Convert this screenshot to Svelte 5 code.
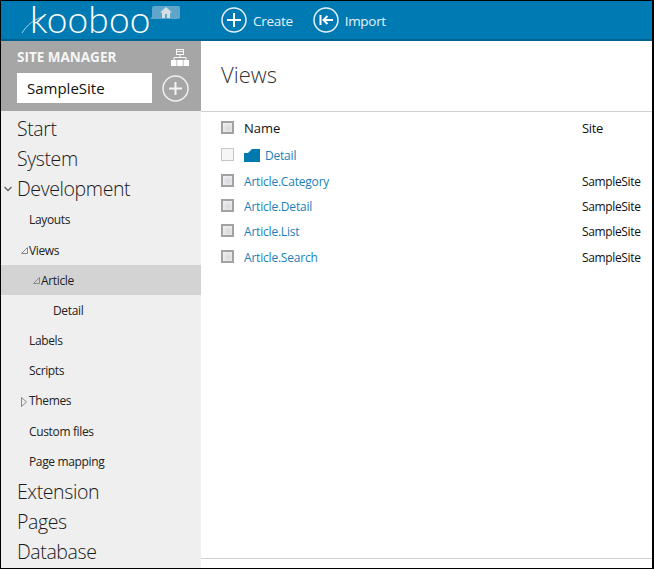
<script>
	const navItems = [
		{ label: 'Start', level: 0 },
		{ label: 'System', level: 0 },
		{ label: 'Development', level: 0, arrow: 'chevron' },
		{ label: 'Layouts', level: 1 },
		{ label: 'Views', level: 1, arrow: 'open' },
		{ label: 'Article', level: 2, arrow: 'open', active: true },
		{ label: 'Detail', level: 3 },
		{ label: 'Labels', level: 1 },
		{ label: 'Scripts', level: 1 },
		{ label: 'Themes', level: 1, arrow: 'closed' },
		{ label: 'Custom files', level: 1 },
		{ label: 'Page mapping', level: 1 },
		{ label: 'Extension', level: 0 },
		{ label: 'Pages', level: 0 },
		{ label: 'Database', level: 0 }
	];

	const views = ['Article.Category', 'Article.Detail', 'Article.List', 'Article.Search'];
</script>

<div class="window">
	<header class="topbar">
		<div class="logo">
			<svg class="swoosh" width="30" height="30" viewBox="0 0 30 30">
				<path d="M1 26 C6 18 13 12 24 9" fill="none" stroke="#a9d5e9" stroke-width="1" />
			</svg>
			<span class="logo-text">kooboo</span>
			<span class="home">
				<svg width="12" height="11" viewBox="0 0 12 11">
					<path d="M6 0 L12 5.5 L10 5.5 L10 11 L7 11 L7 7 L5 7 L5 11 L2 11 L2 5.5 L0 5.5 Z" fill="#d3dfe5" />
				</svg>
			</span>
		</div>
		<nav class="actions">
			<button class="action">
				<svg width="26" height="26" viewBox="0 0 26 26">
					<circle cx="13" cy="13" r="12" fill="none" stroke="#e8f2f7" stroke-width="1.5" />
					<path d="M13 6 V20 M6 13 H20" stroke="#fff" stroke-width="2" />
				</svg>
				<span>Create</span>
			</button>
			<button class="action">
				<svg width="26" height="26" viewBox="0 0 26 26">
					<circle cx="13" cy="13" r="12" fill="none" stroke="#e8f2f7" stroke-width="1.5" />
					<path d="M7.5 8 V18 M20 13 H11 M14.5 9 L10.5 13 L14.5 17" fill="none" stroke="#fff" stroke-width="2" />
				</svg>
				<span>Import</span>
			</button>
		</nav>
	</header>

	<div class="body">
		<aside class="sidebar">
			<div class="site-manager">
				<div class="sm-title">
					<span>SITE MANAGER</span>
					<svg width="18" height="17" viewBox="0 0 18 17">
						<rect x="5.5" y="0.5" width="7" height="5" fill="#a6a6a6" stroke="#f6f6f6" />
						<rect x="6" y="2" width="6" height="1" fill="#f6f6f6" />
						<path d="M9 6 V8.5 M3 11 V8.5 H15 V11" fill="none" stroke="#f6f6f6" />
						<rect x="0" y="11" width="5.5" height="6" fill="#fff" />
						<rect x="6.2" y="11" width="5.6" height="6" fill="#fff" />
						<rect x="12.5" y="11" width="5.5" height="6" fill="#fff" />
					</svg>
				</div>
				<div class="sm-row">
					<div class="site-input">SampleSite</div>
					<svg width="27" height="27" viewBox="0 0 27 27">
						<circle cx="13.5" cy="13.5" r="12.5" fill="none" stroke="#f0f0f0" stroke-width="1.5" />
						<path d="M13.5 7 V20 M7 13.5 H20" stroke="#f4f4f4" stroke-width="2" />
					</svg>
				</div>
			</div>
			<ul class="nav">
				{#each navItems as item}
					<li class="item level-{item.level}" class:active={item.active}>
						{#if item.arrow === 'chevron'}
							<svg class="arrow" width="8" height="6" viewBox="0 0 8 6">
								<path d="M0.5 1 L4 4.5 L7.5 1" fill="none" stroke="#666" stroke-width="1.4" />
							</svg>
						{:else if item.arrow === 'open'}
							<svg class="arrow" width="7" height="7" viewBox="0 0 7 7">
								<path d="M6.5 0.5 V6.5 H0.5 Z" fill="none" stroke="#888" />
							</svg>
						{:else if item.arrow === 'closed'}
							<svg class="arrow" width="6" height="10" viewBox="0 0 6 10">
								<path d="M0.5 0.5 L5.5 5 L0.5 9.5 Z" fill="none" stroke="#888" />
							</svg>
						{/if}
						{item.label}
					</li>
				{/each}
			</ul>
		</aside>

		<main class="content">
			<h1>Views</h1>
			<div class="table">
				<div class="row head">
					<span class="check"></span>
					<span class="name">Name</span>
					<span class="site">Site</span>
				</div>
				<div class="row folder">
					<span class="check light"></span>
					<span class="name">
						<svg width="16" height="13" viewBox="0 0 16 13">
							<path d="M0 4 H4 L8 0 H16 V13 H0 Z" fill="#0078b0" />
						</svg>
						<a href="#detail">Detail</a>
					</span>
				</div>
				{#each views as view}
					<div class="row">
						<span class="check"></span>
						<span class="name"><a href="#view">{view}</a></span>
						<span class="site">SampleSite</span>
					</div>
				{/each}
			</div>
			<div class="footer"></div>
		</main>
	</div>
</div>

<style>
	:global(body) {
		margin: 0;
		background: #000;
	}

	.window {
		width: 651px;
		height: 567px;
		margin: 1px 0 0 1px;
		background: #fff;
		display: flex;
		flex-direction: column;
		font-family: "Open Sans", "Noto Sans", sans-serif;
	}

	.topbar {
		height: 40px;
		flex: none;
		box-sizing: border-box;
		background: #007ab2;
		border-bottom: 2px solid #00628f;
		display: flex;
		align-items: center;
	}

	.logo {
		width: 200px;
		height: 38px;
		flex: none;
		position: relative;
	}

	.logo-text {
		position: absolute;
		left: 29px;
		top: 0;
		color: #fff;
		font-family: Lato, sans-serif;
		font-weight: 300;
		font-size: 37px;
		line-height: 36px;
		letter-spacing: 0.2px;
	}

	.swoosh {
		position: absolute;
		left: 20px;
		top: 6px;
	}

	.home {
		position: absolute;
		left: 151px;
		top: 5px;
		width: 28px;
		height: 13px;
		background: #5fa6ca;
		border-radius: 2px;
		display: flex;
		align-items: center;
		justify-content: center;
	}

	.home::after {
		content: '';
		position: absolute;
		left: -2px;
		bottom: 0;
		border-bottom: 3px solid #5fa6ca;
		border-left: 3px solid transparent;
	}

	.actions {
		display: flex;
		gap: 20px;
		padding-left: 20px;
	}

	.action {
		display: flex;
		align-items: center;
		gap: 6px;
		padding: 0;
		border: 0;
		background: none;
		color: #e8f2f7;
		font: inherit;
		font-size: 13.5px;
		letter-spacing: -0.3px;
	}

	.action span {
		padding-top: 2px;
	}

	.body {
		flex: 1;
		display: flex;
		min-height: 0;
	}

	.sidebar {
		width: 200px;
		flex: none;
		background: #efefef;
		display: flex;
		flex-direction: column;
	}

	.site-manager {
		height: 70px;
		flex: none;
		box-sizing: border-box;
		background: #a6a6a6;
		padding: 4px 12px 0 16px;
	}

	.sm-title {
		display: flex;
		justify-content: space-between;
		align-items: center;
		height: 24px;
		color: #f6f6f6;
		font-size: 13.5px;
		font-weight: 700;
	}

	.sm-row {
		display: flex;
		justify-content: space-between;
		align-items: center;
		margin-top: 4px;
	}

	.site-input {
		width: 135px;
		height: 30px;
		box-sizing: border-box;
		padding-left: 10px;
		background: #fff;
		color: #111;
		font-size: 15px;
		line-height: 30px;
	}

	.nav {
		list-style: none;
		margin: 3px 0 0;
		padding: 0;
	}

	.item {
		position: relative;
		height: 30.17px;
		line-height: 32px;
		color: #222;
		font-size: 12px;
		letter-spacing: -0.35px;
	}

	.level-0 {
		padding-left: 16px;
		font-size: 19.5px;
		font-weight: 300;
		letter-spacing: -0.4px;
		line-height: 30px;
		color: #1a1a1a;
	}

	.level-1 + .level-0 {
		margin-top: 0.7px;
	}

	.level-1 {
		padding-left: 28px;
	}

	.level-2 {
		padding-left: 40px;
	}

	.level-3 {
		padding-left: 52px;
	}

	.active {
		background: #d3d3d3;
	}

	.arrow {
		position: absolute;
		top: 12px;
		left: 20px;
	}

	.level-0 .arrow {
		left: 3px;
	}

	.level-2 .arrow {
		left: 32px;
	}

	.content {
		flex: 1;
		display: flex;
		flex-direction: column;
		min-width: 0;
	}

	h1 {
		height: 71px;
		flex: none;
		box-sizing: border-box;
		margin: 0;
		padding: 16px 0 0 20px;
		border-bottom: 1px solid #d0d0d0;
		color: #333;
		font-size: 22px;
		font-weight: 300;
		line-height: 34px;
	}

	.table {
		flex: 1;
		padding: 0 12px 0 20px;
	}

	.row {
		display: flex;
		align-items: center;
		height: 25.4px;
		font-size: 12px;
		color: #111;
		letter-spacing: -0.2px;
	}

	.head {
		height: 31px;
		font-size: 13px;
		letter-spacing: 0;
	}

	.check {
		width: 13px;
		height: 13px;
		box-sizing: border-box;
		flex: none;
		margin: -2px 10px 0 0;
		border: 2px solid #a2a2a2;
		background: radial-gradient(circle at 60% 60%, #d6d8dc, #f4f4f4);
	}

	.check.light {
		border: 1px solid #c6c6c6;
		background: #f6f6f6;
	}

	.head .check {
		margin-top: 0;
	}

	.name {
		flex: 1;
		display: flex;
		align-items: center;
		gap: 5px;
	}

	.name a {
		color: #1a7fb8;
		text-decoration: none;
	}

	.site {
		width: 58px;
		flex: none;
		letter-spacing: -0.35px;
	}

	.footer {
		height: 9px;
		flex: none;
		border-top: 1px solid #d0d0d0;
	}
</style>
